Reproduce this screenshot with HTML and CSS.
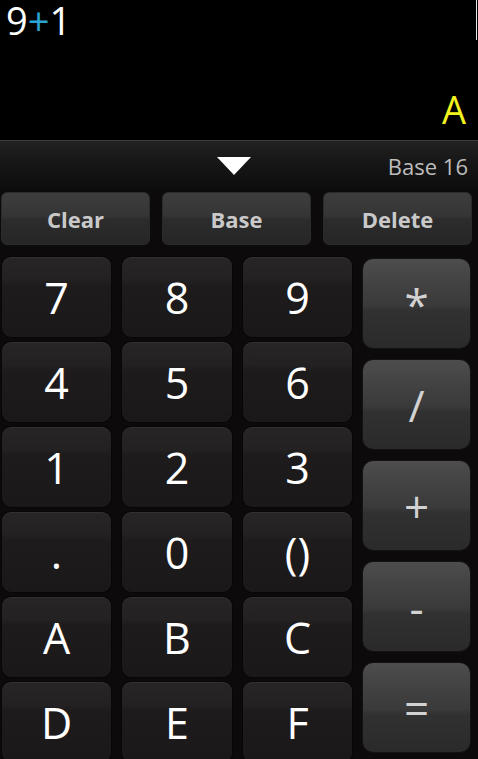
FILE: index.html
```html
<!DOCTYPE html>
<html>
<head>
<meta charset="utf-8">
<link rel="stylesheet" href="styles.css">
</head>
<body>
<div class="app">
  <div class="display">
    <div class="formula">9<span class="op">+</span>1</div>
    <div class="result">A</div>
    <div class="cursor"></div>
  </div>
  <div class="strip">
    <div></div>
    <div class="tri"></div>
    <div class="base">Base 16</div>
  </div>
  <div class="pad">
    <div class="funcs">
      <div class="fbtn">Clear</div>
      <div class="fbtn">Base</div>
      <div class="fbtn">Delete</div>
    </div>
    <div class="keys">
      <div class="nums">
        <div class="num">7</div><div class="num">8</div><div class="num">9</div>
        <div class="num">4</div><div class="num">5</div><div class="num">6</div>
        <div class="num">1</div><div class="num">2</div><div class="num">3</div>
        <div class="num">.</div><div class="num">0</div><div class="num">()</div>
        <div class="num">A</div><div class="num">B</div><div class="num">C</div>
        <div class="num">D</div><div class="num">E</div><div class="num">F</div>
      </div>
      <div class="ops">
        <div class="opk">*</div>
        <div class="opk">/</div>
        <div class="opk">+</div>
        <div class="opk">-</div>
        <div class="opk">=</div>
      </div>
    </div>
  </div>
</div>
</body>
</html>
```

FILE: styles.css
```css
html, body {
  margin: 0;
  padding: 0;
  background: #000;
}
body {
  width: 478px;
  height: 759px;
  overflow: hidden;
  font-family: "Open Sans", "DejaVu Sans", sans-serif;
}
.app {
  display: flex;
  flex-direction: column;
  height: 759px;
}
.display {
  position: relative;
  flex-shrink: 0;
  height: 140px;
  box-sizing: border-box;
  padding: 0 12px 9px 6px;
  display: flex;
  flex-direction: column;
  justify-content: space-between;
  background: #000;
}
.formula {
  font-size: 38px;
  line-height: 1.1;
  color: #fff;
}
.formula .op {
  color: #2ba3d3;
}
.result {
  font-size: 38px;
  line-height: 1.1;
  color: #f2f21e;
  text-align: right;
}
.cursor {
  position: absolute;
  right: 1px;
  top: 0;
  width: 1px;
  height: 40px;
  background: #e8e8e8;
}
.strip {
  flex-shrink: 0;
  height: 50px;
  box-sizing: border-box;
  border-top: 1px solid #3c3c3c;
  background: linear-gradient(180deg, #222 0%, #161616 45%, #0d0d0d 100%);
  display: grid;
  grid-template-columns: 1fr auto 1fr;
  align-items: center;
  padding-right: 10px;
}
.tri {
  width: 0;
  height: 0;
  border-left: 17px solid transparent;
  border-right: 17px solid transparent;
  border-top: 18px solid #fff;
  margin-top: 1px;
}
.base {
  justify-self: end;
  font-size: 22px;
  line-height: 1;
  color: #bdbdbd;
}
.pad {
  flex: 1;
  min-height: 0;
  overflow: hidden;
  background: #0c0a0b;
  padding-top: 2px;
}
.funcs {
  display: grid;
  grid-template-columns: 149px 149px 149px;
  column-gap: 12px;
  padding-left: 1px;
}
.fbtn {
  height: 53px;
  box-sizing: border-box;
  border-radius: 6px;
  border: 1px solid #2a2a2a;
  background: linear-gradient(180deg, #3d3d3d 0%, #353535 45%, #2c2c2c 52%, #262626 100%);
  color: #c9c9c9;
  font-weight: 700;
  font-size: 22px;
  display: flex;
  align-items: center;
  justify-content: center;
}
.keys {
  display: flex;
  padding-left: 2px;
  column-gap: 11px;
  margin-top: 12px;
}
.nums {
  display: grid;
  grid-template-columns: 109px 110px 109px;
  grid-auto-rows: 80px;
  column-gap: 11px;
  row-gap: 5px;
}
.num {
  border-radius: 9px;
  background: linear-gradient(180deg, #272526 0%, #232122 28%, #1d1b1c 36%, #1a1819 100%);
  box-shadow: inset 0 1px 0 rgba(255,255,255,0.05), 0 0 0 1px #080607;
  color: #fff;
  font-size: 43px;
  display: flex;
  align-items: center;
  justify-content: center;
}
.ops {
  display: flex;
  flex-direction: column;
  row-gap: 12px;
  margin-top: 2px;
}
.opk {
  width: 107px;
  height: 89px;
  flex-shrink: 0;
  border-radius: 10px;
  background: linear-gradient(180deg, #4d4d4d 0%, #434343 25%, #3a3a3a 52%, #313131 58%, #2a2a2a 100%);
  box-shadow: 0 0 0 1px #141213;
  color: #d2d2d2;
  font-size: 44px;
  display: flex;
  align-items: center;
  justify-content: center;
}
```
